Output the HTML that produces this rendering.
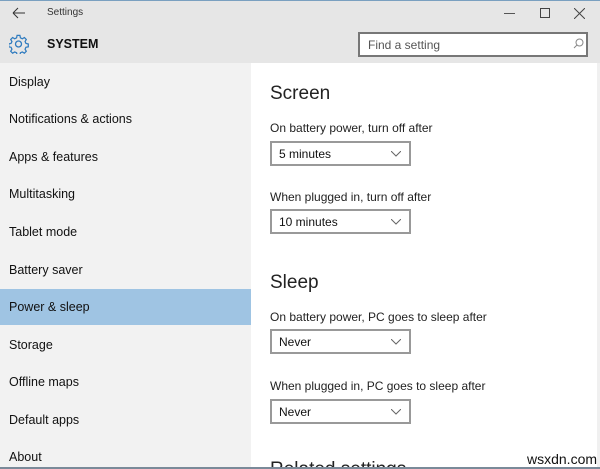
<!DOCTYPE html>
<html style="width:600px;height:469px;overflow:hidden"><head><style>
*{margin:0;padding:0;box-sizing:border-box}
body{width:600px;height:469px;overflow:hidden;background:#e6e6e6;font-family:"Liberation Sans",sans-serif;position:relative;color:#000}
.a{position:absolute}
.side{left:0;top:63px;width:251px;height:406px;background:#f2f2f2}
.it{position:absolute;left:9px;font-size:12.5px;color:#111}
.sel{position:absolute;left:0;top:226px;width:251px;height:36px;background:#9fc4e3}
.main{left:251px;top:63px;width:346px;height:406px;background:#fff;overflow:hidden}
.h{position:absolute;left:19px;font-size:19px;color:#222}
.l{position:absolute;left:19px;font-size:12px;color:#222}
.dd{position:absolute;left:19px;width:141px;height:25px;border:2px solid #999;font-size:12px;padding:4px 0 0 7px;color:#111}
.dd svg{position:absolute;right:8px;top:8px}
</style></head><body>
<div class="a" style="left:0;top:0;width:600px;height:1px;background:#7aa0c0"></div>
<svg class="a" style="left:12px;top:7px" width="14" height="12"><path d="M1 6H13M1 6L6 1M1 6L6 11" stroke="#333" fill="none" stroke-width="1"/></svg>
<div class="a" style="left:47px;top:7px;font-size:10px;color:#333">Settings</div>
<div class="a" style="left:504px;top:13px;width:11px;height:1px;background:#555"></div>
<div class="a" style="left:540px;top:8px;width:10px;height:10px;border:1px solid #444"></div>
<svg class="a" style="left:574px;top:8px" width="11" height="11"><path d="M0 0L11 11M11 0L0 11" stroke="#444"/></svg>
<svg class="a" style="left:9px;top:34px" width="20" height="20" viewBox="0 0 20 20"><path d="M8.5 1.5h3l.5 2.5 2 1 2.2-1.3 2 2-1.3 2.2.9 2 2.5.6v3l-2.5.5-.9 2 1.3 2.2-2 2-2.2-1.3-2 .9-.5 2.5h-3l-.5-2.5-2-.9-2.200 1.3-2-2 1.3-2.2-.9-2-2.5-.5v-3l2.5-.6.9-2-1.3-2.2 2-2 2.2 1.3 2-1z" transform="scale(.95)" fill="none" stroke="#2f7bbf" stroke-width="1.3"/><circle cx="9.5" cy="10" r="3" fill="none" stroke="#2f7bbf" stroke-width="1.3"/></svg>
<div class="a" style="left:47px;top:37px;font-size:12.5px;font-weight:bold;color:#111">SYSTEM</div>
<div class="a" style="left:358px;top:32px;width:230px;height:25px;border:2px solid #777;background:#fff;font-size:12px;color:#555;padding:4px 0 0 8px">Find a setting</div>
<svg class="a" style="left:573px;top:38px" width="11" height="11"><circle cx="6.5" cy="4.5" r="3.5" fill="none" stroke="#888"/><path d="M4 7L1 10" stroke="#888"/></svg>
<div class="a side">
<div class="sel"></div>
<div class="it" style="top:12px">Display</div>
<div class="it" style="top:49px">Notifications &amp; actions</div>
<div class="it" style="top:87px">Apps &amp; features</div>
<div class="it" style="top:124px">Multitasking</div>
<div class="it" style="top:162px">Tablet mode</div>
<div class="it" style="top:200px">Battery saver</div>
<div class="it" style="top:237px">Power &amp; sleep</div>
<div class="it" style="top:275px">Storage</div>
<div class="it" style="top:312px">Offline maps</div>
<div class="it" style="top:350px">Default apps</div>
<div class="it" style="top:387px">About</div>
</div>
<div class="a main">
<div class="h" style="top:20px">Screen</div>
<div class="l" style="top:58px">On battery power, turn off after</div>
<div class="dd" style="top:78px">5 minutes<svg width="10" height="6"><path d="M0 0L5 5L10 0" stroke="#666" fill="none"/></svg></div>
<div class="l" style="top:127px">When plugged in, turn off after</div>
<div class="dd" style="top:146px">10 minutes<svg width="10" height="6"><path d="M0 0L5 5L10 0" stroke="#666" fill="none"/></svg></div>
<div class="h" style="top:209px">Sleep</div>
<div class="l" style="top:247px">On battery power, PC goes to sleep after</div>
<div class="dd" style="top:266px">Never<svg width="10" height="6"><path d="M0 0L5 5L10 0" stroke="#666" fill="none"/></svg></div>
<div class="l" style="top:316px">When plugged in, PC goes to sleep after</div>
<div class="dd" style="top:336px">Never<svg width="10" height="6"><path d="M0 0L5 5L10 0" stroke="#666" fill="none"/></svg></div>
<div class="h" style="top:396px">Related settings</div>
<div class="a" style="left:274px;top:388px;font-size:14px;color:#111;background:#fff;padding:0 2px">wsxdn.com</div>
</div>
<div class="a" style="left:597px;top:63px;width:3px;height:406px;background:#f0f0f0"></div>
<div class="a" style="left:0;top:467px;width:600px;height:2px;background:#7a8a99"></div>
</body></html>
